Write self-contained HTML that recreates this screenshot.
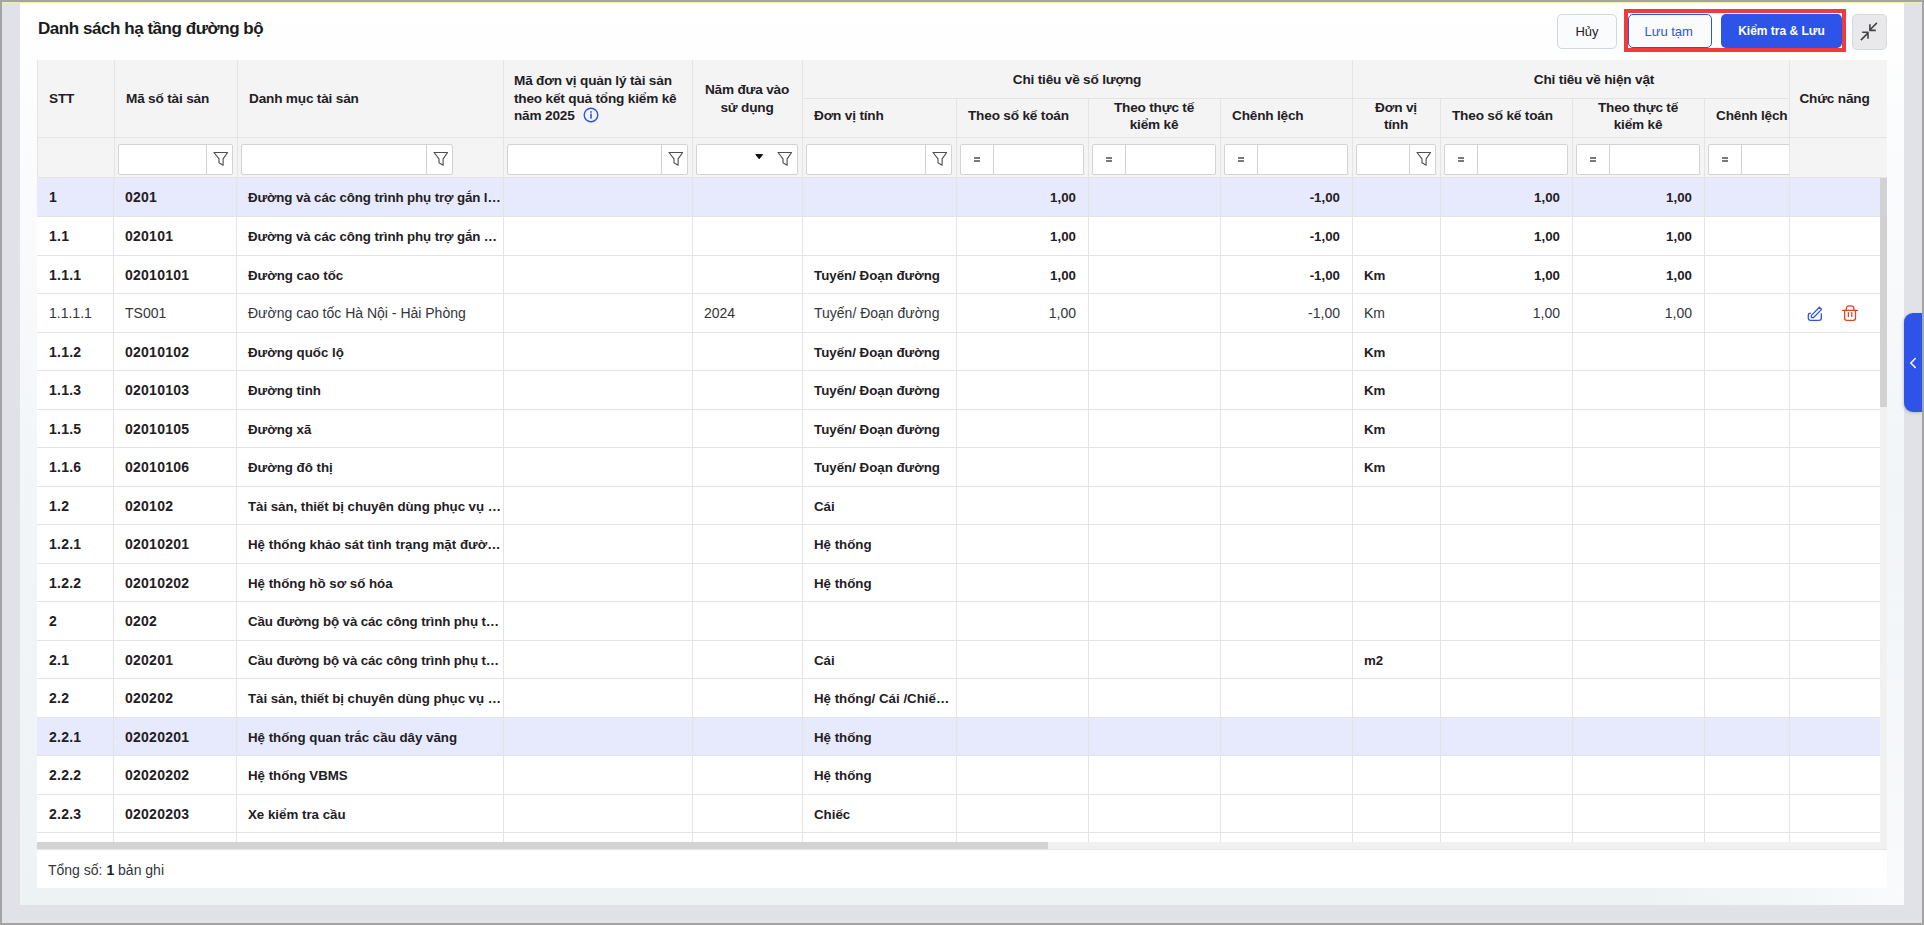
<!DOCTYPE html>
<html><head><meta charset="utf-8"><title>Danh sách hạ tầng đường bộ</title><style>
html,body{margin:0;padding:0;}
body{width:1924px;height:925px;position:relative;overflow:hidden;background:#e1e2e8;font-family:"Liberation Sans", sans-serif;}
.t{position:absolute;white-space:nowrap;line-height:17px;}
.b{font-weight:bold;font-size:13.3px;color:#1f2024;}
.bd{font-weight:bold;font-size:14px;letter-spacing:0.25px;color:#1f2024;}
.n{font-size:14px;color:#33353a;}
.h{font-weight:bold;font-size:13.6px;letter-spacing:-0.18px;color:#1f2024;}
</style></head><body>

<div style="position:absolute;left:0px;top:0px;width:1924px;height:2px;background:#a4a4a4"></div>
<div style="position:absolute;left:0px;top:2px;width:1924px;height:1px;background:#f3eda8"></div>
<div style="position:absolute;left:0px;top:0px;width:2px;height:925px;background:#a4a4a4"></div>
<div style="position:absolute;left:0px;top:923px;width:1924px;height:2px;background:#a4a4a4"></div>
<div style="position:absolute;left:20px;top:3px;width:1884px;height:902px;background:radial-gradient(ellipse 260px 420px at 100% 100%,rgba(255,255,255,0.65),rgba(255,255,255,0) 100%),linear-gradient(180deg,#ffffff 0%,#fbfcfd 15%,#f3f6f9 50%,#edf2f5 100%)"></div>
<div class="t " style="left:38px;top:19px;font-size:17px;font-weight:bold;letter-spacing:-0.45px;color:#1b1c20;line-height:20px">Danh sách hạ tầng đường bộ</div>
<div style="position:absolute;left:1557px;top:14px;width:58px;height:33px;border:1px solid #d2d6de;border-radius:5px;background:#fafbfc"></div>
<div class="t " style="left:1557px;top:22.5px;width:60px;text-align:center;font-size:13px;color:#1f2024">Hủy</div>
<div style="position:absolute;left:1628px;top:14px;width:82px;height:32px;border:1px solid #2e53e8;border-radius:5px;background:#fafbfd"></div>
<div class="t " style="left:1626.7px;top:22.5px;width:84px;text-align:center;font-size:13px;color:#2e53e8">Lưu tạm</div>
<div style="position:absolute;left:1721px;top:14px;width:121px;height:34px;background:#2e53e8;border-radius:5px"></div>
<div class="t " style="left:1721px;top:22.5px;width:121px;text-align:center;font-size:12px;font-weight:bold;color:#fff">Kiểm tra &amp; Lưu</div>
<div style="position:absolute;left:1624px;top:9px;width:214px;height:35px;border:4px solid #ef3a3e"></div>
<div style="position:absolute;left:1852px;top:14px;width:33px;height:33.5px;border:1px solid #d6d9e0;border-radius:5px;background:#e9e9eb"></div>
<svg width="35" height="35" viewBox="0 0 35 35" style="position:absolute;left:1852px;top:14px" fill="none" stroke="#444" stroke-width="1.6" stroke-linejoin="round"><path d="M24.9 8.9 L18.3 15.5 M17.9 10.2 V16.4 H23.8"/><path d="M8.9 26.1 L15.6 19.4 M10.2 18.3 H16 V24.7"/></svg>
<div style="position:absolute;left:37px;top:60px;width:1850px;height:828px;background:#fff"></div>
<div style="position:absolute;left:37px;top:60px;width:1850px;height:118px;background:#f4f4f4"></div>
<div style="position:absolute;left:37px;top:178px;width:1843px;height:38px;background:#e7eafc"></div>
<div style="position:absolute;left:37px;top:718px;width:1843px;height:37px;background:#e7eafc"></div>
<div style="position:absolute;left:37px;top:216px;width:1843px;height:1px;background:#e4e4e4"></div>
<div style="position:absolute;left:37px;top:255px;width:1843px;height:1px;background:#e4e4e4"></div>
<div style="position:absolute;left:37px;top:293px;width:1843px;height:1px;background:#e4e4e4"></div>
<div style="position:absolute;left:37px;top:332px;width:1843px;height:1px;background:#e4e4e4"></div>
<div style="position:absolute;left:37px;top:370px;width:1843px;height:1px;background:#e4e4e4"></div>
<div style="position:absolute;left:37px;top:409px;width:1843px;height:1px;background:#e4e4e4"></div>
<div style="position:absolute;left:37px;top:447px;width:1843px;height:1px;background:#e4e4e4"></div>
<div style="position:absolute;left:37px;top:486px;width:1843px;height:1px;background:#e4e4e4"></div>
<div style="position:absolute;left:37px;top:524px;width:1843px;height:1px;background:#e4e4e4"></div>
<div style="position:absolute;left:37px;top:563px;width:1843px;height:1px;background:#e4e4e4"></div>
<div style="position:absolute;left:37px;top:601px;width:1843px;height:1px;background:#e4e4e4"></div>
<div style="position:absolute;left:37px;top:640px;width:1843px;height:1px;background:#e4e4e4"></div>
<div style="position:absolute;left:37px;top:678px;width:1843px;height:1px;background:#e4e4e4"></div>
<div style="position:absolute;left:37px;top:717px;width:1843px;height:1px;background:#e4e4e4"></div>
<div style="position:absolute;left:37px;top:755px;width:1843px;height:1px;background:#e4e4e4"></div>
<div style="position:absolute;left:37px;top:794px;width:1843px;height:1px;background:#e4e4e4"></div>
<div style="position:absolute;left:37px;top:832px;width:1843px;height:1px;background:#e4e4e4"></div>
<div style="position:absolute;left:113px;top:178px;width:1px;height:664px;background:#e4e4e4"></div>
<div style="position:absolute;left:236px;top:178px;width:1px;height:664px;background:#e4e4e4"></div>
<div style="position:absolute;left:503px;top:178px;width:1px;height:664px;background:#e4e4e4"></div>
<div style="position:absolute;left:692px;top:178px;width:1px;height:664px;background:#e4e4e4"></div>
<div style="position:absolute;left:802px;top:178px;width:1px;height:664px;background:#e4e4e4"></div>
<div style="position:absolute;left:956px;top:178px;width:1px;height:664px;background:#e4e4e4"></div>
<div style="position:absolute;left:1088px;top:178px;width:1px;height:664px;background:#e4e4e4"></div>
<div style="position:absolute;left:1220px;top:178px;width:1px;height:664px;background:#e4e4e4"></div>
<div style="position:absolute;left:1352px;top:178px;width:1px;height:664px;background:#e4e4e4"></div>
<div style="position:absolute;left:1440px;top:178px;width:1px;height:664px;background:#e4e4e4"></div>
<div style="position:absolute;left:1572px;top:178px;width:1px;height:664px;background:#e4e4e4"></div>
<div style="position:absolute;left:1704px;top:178px;width:1px;height:664px;background:#e4e4e4"></div>
<div style="position:absolute;left:37px;top:60px;width:1px;height:118px;background:#e4e4e4"></div>
<div style="position:absolute;left:37px;top:137px;width:1850px;height:1px;background:#e4e4e4"></div>
<div style="position:absolute;left:37px;top:177px;width:1850px;height:1px;background:#e4e4e4"></div>
<div style="position:absolute;left:802px;top:98px;width:987px;height:1px;background:#e4e4e4"></div>
<div style="position:absolute;left:114px;top:60px;width:1px;height:118px;background:#e4e4e4"></div>
<div style="position:absolute;left:237px;top:60px;width:1px;height:118px;background:#e4e4e4"></div>
<div style="position:absolute;left:503px;top:60px;width:1px;height:118px;background:#e4e4e4"></div>
<div style="position:absolute;left:692px;top:60px;width:1px;height:118px;background:#e4e4e4"></div>
<div style="position:absolute;left:802px;top:60px;width:1px;height:118px;background:#e4e4e4"></div>
<div style="position:absolute;left:1352px;top:60px;width:1px;height:118px;background:#e4e4e4"></div>
<div style="position:absolute;left:956px;top:98px;width:1px;height:80px;background:#e4e4e4"></div>
<div style="position:absolute;left:1088px;top:98px;width:1px;height:80px;background:#e4e4e4"></div>
<div style="position:absolute;left:1220px;top:98px;width:1px;height:80px;background:#e4e4e4"></div>
<div style="position:absolute;left:1440px;top:98px;width:1px;height:80px;background:#e4e4e4"></div>
<div style="position:absolute;left:1572px;top:98px;width:1px;height:80px;background:#e4e4e4"></div>
<div style="position:absolute;left:1704px;top:98px;width:1px;height:80px;background:#e4e4e4"></div>
<div class="t h" style="left:49px;top:90px;">STT</div>
<div class="t h" style="left:126px;top:90px;">Mã số tài sản</div>
<div class="t h" style="left:249px;top:90px;">Danh mục tài sản</div>
<div class="t h" style="left:514px;top:72px;line-height:17.5px">Mã đơn vị quản lý tài sản<br>theo kết quả tổng kiểm kê<br>năm 2025</div>
<svg width="16" height="16" viewBox="0 0 16 16" style="position:absolute;left:583px;top:107px"><circle cx="8" cy="8" r="6.8" fill="none" stroke="#2e53e8" stroke-width="1.4"/><rect x="7.2" y="6.6" width="1.6" height="5" fill="#2e53e8"/><rect x="7.2" y="4.2" width="1.6" height="1.6" fill="#2e53e8"/></svg>
<div class="t h" style="left:692px;top:81px;width:110px;text-align:center;line-height:17.5px">Năm đưa vào<br>sử dụng</div>
<div class="t h" style="left:802px;top:71px;width:550px;text-align:center">Chỉ tiêu về số lượng</div>
<div class="t h" style="left:1352px;top:71px;width:484px;text-align:center">Chỉ tiêu về hiện vật</div>
<div class="t h" style="left:814px;top:107px;">Đơn vị tính</div>
<div class="t h" style="left:968px;top:107px;">Theo số kế toán</div>
<div class="t h" style="left:1088px;top:98.5px;width:132px;text-align:center;line-height:17.5px">Theo thực tế<br>kiểm kê</div>
<div class="t h" style="left:1232px;top:107px;">Chênh lệch</div>
<div class="t h" style="left:1452px;top:107px;">Theo số kế toán</div>
<div class="t h" style="left:1572px;top:98.5px;width:132px;text-align:center;line-height:17.5px">Theo thực tế<br>kiểm kê</div>
<div class="t h" style="left:1716px;top:107px;">Chênh lệch</div>
<div class="t h" style="left:1352px;top:98.5px;width:88px;text-align:center;line-height:17.5px">Đơn vị<br>tính</div>
<div style="position:absolute;left:118px;top:144px;width:113px;height:29px;border:1px solid #d3d3d3;border-radius:2px;background:#fff"></div>
<div style="position:absolute;left:206px;top:145px;width:1px;height:29px;background:#d3d3d3"></div>
<svg width="17" height="17" viewBox="0 0 17 17" style="position:absolute;left:212px;top:151px"><path d="M2 1.5 H15.6 L11.1 7.9 V14.2 L7 11.8 V7.9 Z" fill="none" stroke="#505050" stroke-width="1.15" stroke-linejoin="round"/></svg>
<div style="position:absolute;left:241px;top:144px;width:210px;height:29px;border:1px solid #d3d3d3;border-radius:2px;background:#fff"></div>
<div style="position:absolute;left:426px;top:145px;width:1px;height:29px;background:#d3d3d3"></div>
<svg width="17" height="17" viewBox="0 0 17 17" style="position:absolute;left:432px;top:151px"><path d="M2 1.5 H15.6 L11.1 7.9 V14.2 L7 11.8 V7.9 Z" fill="none" stroke="#505050" stroke-width="1.15" stroke-linejoin="round"/></svg>
<div style="position:absolute;left:507px;top:144px;width:179px;height:29px;border:1px solid #d3d3d3;border-radius:2px;background:#fff"></div>
<div style="position:absolute;left:661px;top:145px;width:1px;height:29px;background:#d3d3d3"></div>
<svg width="17" height="17" viewBox="0 0 17 17" style="position:absolute;left:667px;top:151px"><path d="M2 1.5 H15.6 L11.1 7.9 V14.2 L7 11.8 V7.9 Z" fill="none" stroke="#505050" stroke-width="1.15" stroke-linejoin="round"/></svg>
<div style="position:absolute;left:696px;top:144px;width:100px;height:29px;border:1px solid #d3d3d3;border-radius:2px;background:#fff"></div>
<svg width="9" height="6" viewBox="0 0 9 6" style="position:absolute;left:755px;top:154px"><path d="M0.8 0.6 H7.6 L4.2 4.8 Z" fill="#111" stroke="#111" stroke-width="1" stroke-linejoin="round"/></svg>
<svg width="17" height="17" viewBox="0 0 17 17" style="position:absolute;left:775.5px;top:151px"><path d="M2 1.5 H15.6 L11.1 7.9 V14.2 L7 11.8 V7.9 Z" fill="none" stroke="#505050" stroke-width="1.15" stroke-linejoin="round"/></svg>
<div style="position:absolute;left:806px;top:144px;width:144px;height:29px;border:1px solid #d3d3d3;border-radius:2px;background:#fff"></div>
<div style="position:absolute;left:925px;top:145px;width:1px;height:29px;background:#d3d3d3"></div>
<svg width="17" height="17" viewBox="0 0 17 17" style="position:absolute;left:931px;top:151px"><path d="M2 1.5 H15.6 L11.1 7.9 V14.2 L7 11.8 V7.9 Z" fill="none" stroke="#505050" stroke-width="1.15" stroke-linejoin="round"/></svg>
<div style="position:absolute;left:960px;top:144px;width:122px;height:29px;border:1px solid #d3d3d3;border-radius:2px;background:#fff"></div>
<div style="position:absolute;left:993px;top:145px;width:1px;height:29px;background:#d3d3d3"></div>
<div style="position:absolute;left:974px;top:157px;width:6px;height:1.5px;background:#7a7a7a"></div>
<div style="position:absolute;left:974px;top:160px;width:6px;height:1.5px;background:#7a7a7a"></div>
<div style="position:absolute;left:1092px;top:144px;width:122px;height:29px;border:1px solid #d3d3d3;border-radius:2px;background:#fff"></div>
<div style="position:absolute;left:1125px;top:145px;width:1px;height:29px;background:#d3d3d3"></div>
<div style="position:absolute;left:1106px;top:157px;width:6px;height:1.5px;background:#7a7a7a"></div>
<div style="position:absolute;left:1106px;top:160px;width:6px;height:1.5px;background:#7a7a7a"></div>
<div style="position:absolute;left:1224px;top:144px;width:122px;height:29px;border:1px solid #d3d3d3;border-radius:2px;background:#fff"></div>
<div style="position:absolute;left:1257px;top:145px;width:1px;height:29px;background:#d3d3d3"></div>
<div style="position:absolute;left:1238px;top:157px;width:6px;height:1.5px;background:#7a7a7a"></div>
<div style="position:absolute;left:1238px;top:160px;width:6px;height:1.5px;background:#7a7a7a"></div>
<div style="position:absolute;left:1356px;top:144px;width:78px;height:29px;border:1px solid #d3d3d3;border-radius:2px;background:#fff"></div>
<div style="position:absolute;left:1409px;top:145px;width:1px;height:29px;background:#d3d3d3"></div>
<svg width="17" height="17" viewBox="0 0 17 17" style="position:absolute;left:1415px;top:151px"><path d="M2 1.5 H15.6 L11.1 7.9 V14.2 L7 11.8 V7.9 Z" fill="none" stroke="#505050" stroke-width="1.15" stroke-linejoin="round"/></svg>
<div style="position:absolute;left:1444px;top:144px;width:122px;height:29px;border:1px solid #d3d3d3;border-radius:2px;background:#fff"></div>
<div style="position:absolute;left:1477px;top:145px;width:1px;height:29px;background:#d3d3d3"></div>
<div style="position:absolute;left:1458px;top:157px;width:6px;height:1.5px;background:#7a7a7a"></div>
<div style="position:absolute;left:1458px;top:160px;width:6px;height:1.5px;background:#7a7a7a"></div>
<div style="position:absolute;left:1576px;top:144px;width:122px;height:29px;border:1px solid #d3d3d3;border-radius:2px;background:#fff"></div>
<div style="position:absolute;left:1609px;top:145px;width:1px;height:29px;background:#d3d3d3"></div>
<div style="position:absolute;left:1590px;top:157px;width:6px;height:1.5px;background:#7a7a7a"></div>
<div style="position:absolute;left:1590px;top:160px;width:6px;height:1.5px;background:#7a7a7a"></div>
<div style="position:absolute;left:1708px;top:144px;width:122px;height:29px;border:1px solid #d3d3d3;border-radius:2px;background:#fff"></div>
<div style="position:absolute;left:1741px;top:145px;width:1px;height:29px;background:#d3d3d3"></div>
<div style="position:absolute;left:1722px;top:157px;width:6px;height:1.5px;background:#7a7a7a"></div>
<div style="position:absolute;left:1722px;top:160px;width:6px;height:1.5px;background:#7a7a7a"></div>
<div class="t bd" style="left:49px;top:188.65px;">1</div>
<div class="t bd" style="left:125px;top:188.65px;">0201</div>
<div class="t b" style="left:248px;top:188.9px;letter-spacing:-0.11px">Đường và các công trình phụ trợ gắn l…</div>
<div class="t b" style="left:956px;top:188.9px;width:120px;text-align:right">1,00</div>
<div class="t b" style="left:1220px;top:188.9px;width:120px;text-align:right">-1,00</div>
<div class="t b" style="left:1440px;top:188.9px;width:120px;text-align:right">1,00</div>
<div class="t b" style="left:1572px;top:188.9px;width:120px;text-align:right">1,00</div>
<div class="t bd" style="left:49px;top:227.65px;">1.1</div>
<div class="t bd" style="left:125px;top:227.65px;">020101</div>
<div class="t b" style="left:248px;top:227.9px;letter-spacing:-0.11px">Đường và các công trình phụ trợ gắn …</div>
<div class="t b" style="left:956px;top:227.9px;width:120px;text-align:right">1,00</div>
<div class="t b" style="left:1220px;top:227.9px;width:120px;text-align:right">-1,00</div>
<div class="t b" style="left:1440px;top:227.9px;width:120px;text-align:right">1,00</div>
<div class="t b" style="left:1572px;top:227.9px;width:120px;text-align:right">1,00</div>
<div class="t bd" style="left:49px;top:266.65px;">1.1.1</div>
<div class="t bd" style="left:125px;top:266.65px;">02010101</div>
<div class="t b" style="left:248px;top:266.9px;">Đường cao tốc</div>
<div class="t b" style="left:814px;top:266.9px;">Tuyến/ Đoạn đường</div>
<div class="t b" style="left:956px;top:266.9px;width:120px;text-align:right">1,00</div>
<div class="t b" style="left:1220px;top:266.9px;width:120px;text-align:right">-1,00</div>
<div class="t b" style="left:1364px;top:266.9px;">Km</div>
<div class="t b" style="left:1440px;top:266.9px;width:120px;text-align:right">1,00</div>
<div class="t b" style="left:1572px;top:266.9px;width:120px;text-align:right">1,00</div>
<div class="t n" style="left:49px;top:304.65px;">1.1.1.1</div>
<div class="t n" style="left:125px;top:304.65px;">TS001</div>
<div class="t n" style="left:248px;top:304.65px;">Đường cao tốc Hà Nội - Hải Phòng</div>
<div class="t n" style="left:704px;top:304.65px;">2024</div>
<div class="t n" style="left:814px;top:304.65px;">Tuyến/ Đoạn đường</div>
<div class="t n" style="left:956px;top:304.65px;width:120px;text-align:right">1,00</div>
<div class="t n" style="left:1220px;top:304.65px;width:120px;text-align:right">-1,00</div>
<div class="t n" style="left:1364px;top:304.65px;">Km</div>
<div class="t n" style="left:1440px;top:304.65px;width:120px;text-align:right">1,00</div>
<div class="t n" style="left:1572px;top:304.65px;width:120px;text-align:right">1,00</div>
<div class="t bd" style="left:49px;top:343.65px;">1.1.2</div>
<div class="t bd" style="left:125px;top:343.65px;">02010102</div>
<div class="t b" style="left:248px;top:343.9px;">Đường quốc lộ</div>
<div class="t b" style="left:814px;top:343.9px;">Tuyến/ Đoạn đường</div>
<div class="t b" style="left:1364px;top:343.9px;">Km</div>
<div class="t bd" style="left:49px;top:381.65px;">1.1.3</div>
<div class="t bd" style="left:125px;top:381.65px;">02010103</div>
<div class="t b" style="left:248px;top:381.9px;">Đường tỉnh</div>
<div class="t b" style="left:814px;top:381.9px;">Tuyến/ Đoạn đường</div>
<div class="t b" style="left:1364px;top:381.9px;">Km</div>
<div class="t bd" style="left:49px;top:420.65px;">1.1.5</div>
<div class="t bd" style="left:125px;top:420.65px;">02010105</div>
<div class="t b" style="left:248px;top:420.9px;">Đường xã</div>
<div class="t b" style="left:814px;top:420.9px;">Tuyến/ Đoạn đường</div>
<div class="t b" style="left:1364px;top:420.9px;">Km</div>
<div class="t bd" style="left:49px;top:458.65px;">1.1.6</div>
<div class="t bd" style="left:125px;top:458.65px;">02010106</div>
<div class="t b" style="left:248px;top:458.9px;">Đường đô thị</div>
<div class="t b" style="left:814px;top:458.9px;">Tuyến/ Đoạn đường</div>
<div class="t b" style="left:1364px;top:458.9px;">Km</div>
<div class="t bd" style="left:49px;top:497.65px;">1.2</div>
<div class="t bd" style="left:125px;top:497.65px;">020102</div>
<div class="t b" style="left:248px;top:497.9px;letter-spacing:-0.05px">Tài sản, thiết bị chuyên dùng phục vụ …</div>
<div class="t b" style="left:814px;top:497.9px;">Cái</div>
<div class="t bd" style="left:49px;top:535.65px;">1.2.1</div>
<div class="t bd" style="left:125px;top:535.65px;">02010201</div>
<div class="t b" style="left:248px;top:535.9px;letter-spacing:0.02px">Hệ thống khảo sát tình trạng mặt đườ…</div>
<div class="t b" style="left:814px;top:535.9px;">Hệ thống</div>
<div class="t bd" style="left:49px;top:574.65px;">1.2.2</div>
<div class="t bd" style="left:125px;top:574.65px;">02010202</div>
<div class="t b" style="left:248px;top:574.9px;">Hệ thống hồ sơ số hóa</div>
<div class="t b" style="left:814px;top:574.9px;">Hệ thống</div>
<div class="t bd" style="left:49px;top:612.65px;">2</div>
<div class="t bd" style="left:125px;top:612.65px;">0202</div>
<div class="t b" style="left:248px;top:612.9px;letter-spacing:-0.1px">Cầu đường bộ và các công trình phụ t…</div>
<div class="t bd" style="left:49px;top:651.65px;">2.1</div>
<div class="t bd" style="left:125px;top:651.65px;">020201</div>
<div class="t b" style="left:248px;top:651.9px;letter-spacing:-0.1px">Cầu đường bộ và các công trình phụ t…</div>
<div class="t b" style="left:814px;top:651.9px;">Cái</div>
<div class="t b" style="left:1364px;top:651.9px;">m2</div>
<div class="t bd" style="left:49px;top:689.65px;">2.2</div>
<div class="t bd" style="left:125px;top:689.65px;">020202</div>
<div class="t b" style="left:248px;top:689.9px;letter-spacing:-0.05px">Tài sản, thiết bị chuyên dùng phục vụ …</div>
<div class="t b" style="left:814px;top:689.9px;">Hệ thống/ Cái /Chiế…</div>
<div class="t bd" style="left:49px;top:728.65px;">2.2.1</div>
<div class="t bd" style="left:125px;top:728.65px;">02020201</div>
<div class="t b" style="left:248px;top:728.9px;">Hệ thống quan trắc cầu dây văng</div>
<div class="t b" style="left:814px;top:728.9px;">Hệ thống</div>
<div class="t bd" style="left:49px;top:766.65px;">2.2.2</div>
<div class="t bd" style="left:125px;top:766.65px;">02020202</div>
<div class="t b" style="left:248px;top:766.9px;">Hệ thống VBMS</div>
<div class="t b" style="left:814px;top:766.9px;">Hệ thống</div>
<div class="t bd" style="left:49px;top:805.65px;">2.2.3</div>
<div class="t bd" style="left:125px;top:805.65px;">02020203</div>
<div class="t b" style="left:248px;top:805.9px;">Xe kiểm tra cầu</div>
<div class="t b" style="left:814px;top:805.9px;">Chiếc</div>
<div style="position:absolute;left:1789px;top:60px;width:98px;height:118px;background:#f4f4f4"></div>
<div style="position:absolute;left:1789px;top:60px;width:1px;height:782px;background:#e4e4e4"></div>
<div style="position:absolute;left:1789px;top:137px;width:98px;height:1px;background:#e4e4e4"></div>
<div style="position:absolute;left:1789px;top:177px;width:98px;height:1px;background:#e4e4e4"></div>
<div class="t h" style="left:1789px;top:90px;width:91px;text-align:center">Chức năng</div>
<div style="position:absolute;left:1790px;top:178px;width:90px;height:38px;background:#e7eafc"></div>
<div style="position:absolute;left:1789px;top:216px;width:91px;height:1px;background:#e4e4e4"></div>
<div style="position:absolute;left:1790px;top:217px;width:90px;height:38px;background:#fff"></div>
<div style="position:absolute;left:1789px;top:255px;width:91px;height:1px;background:#e4e4e4"></div>
<div style="position:absolute;left:1790px;top:256px;width:90px;height:37px;background:#fff"></div>
<div style="position:absolute;left:1789px;top:293px;width:91px;height:1px;background:#e4e4e4"></div>
<div style="position:absolute;left:1790px;top:294px;width:90px;height:38px;background:#fff"></div>
<svg width="16" height="16" viewBox="0 0 16 16" style="position:absolute;left:1807px;top:305px" fill="none" stroke="#2e53e8" stroke-width="1.3" stroke-linecap="round" stroke-linejoin="round"><path d="M4.4 10.4 L12.4 2.3 L14.6 4.4 L6.6 12.5 L4.4 12.7 Z"/><path d="M3.3 8.2 Q1.3 8.3 1.3 10.6 V13 Q1.3 15.3 3.6 15.3 H12 Q14.3 15.3 14.3 13 V8.8"/></svg>
<svg width="18" height="18" viewBox="0 0 18 18" style="position:absolute;left:1841px;top:304px" fill="none" stroke="#df4522" stroke-width="1.3" stroke-linecap="round" stroke-linejoin="round"><path d="M1.4 6.3 H16.6"/><path d="M5.3 6.2 V4.9 Q5.3 1.8 8.2 1.8 H10 Q12.9 1.8 12.9 4.9 V6.2"/><path d="M3.6 6.5 V14.2 Q3.6 16.3 5.7 16.3 H12.4 Q14.5 16.3 14.5 14.2 V6.5"/><path d="M7.4 8.6 V12.6 M10.8 8.6 V12.6"/></svg>
<div style="position:absolute;left:1789px;top:332px;width:91px;height:1px;background:#e4e4e4"></div>
<div style="position:absolute;left:1790px;top:333px;width:90px;height:37px;background:#fff"></div>
<div style="position:absolute;left:1789px;top:370px;width:91px;height:1px;background:#e4e4e4"></div>
<div style="position:absolute;left:1790px;top:371px;width:90px;height:38px;background:#fff"></div>
<div style="position:absolute;left:1789px;top:409px;width:91px;height:1px;background:#e4e4e4"></div>
<div style="position:absolute;left:1790px;top:410px;width:90px;height:37px;background:#fff"></div>
<div style="position:absolute;left:1789px;top:447px;width:91px;height:1px;background:#e4e4e4"></div>
<div style="position:absolute;left:1790px;top:448px;width:90px;height:38px;background:#fff"></div>
<div style="position:absolute;left:1789px;top:486px;width:91px;height:1px;background:#e4e4e4"></div>
<div style="position:absolute;left:1790px;top:487px;width:90px;height:37px;background:#fff"></div>
<div style="position:absolute;left:1789px;top:524px;width:91px;height:1px;background:#e4e4e4"></div>
<div style="position:absolute;left:1790px;top:525px;width:90px;height:38px;background:#fff"></div>
<div style="position:absolute;left:1789px;top:563px;width:91px;height:1px;background:#e4e4e4"></div>
<div style="position:absolute;left:1790px;top:564px;width:90px;height:37px;background:#fff"></div>
<div style="position:absolute;left:1789px;top:601px;width:91px;height:1px;background:#e4e4e4"></div>
<div style="position:absolute;left:1790px;top:602px;width:90px;height:38px;background:#fff"></div>
<div style="position:absolute;left:1789px;top:640px;width:91px;height:1px;background:#e4e4e4"></div>
<div style="position:absolute;left:1790px;top:641px;width:90px;height:37px;background:#fff"></div>
<div style="position:absolute;left:1789px;top:678px;width:91px;height:1px;background:#e4e4e4"></div>
<div style="position:absolute;left:1790px;top:679px;width:90px;height:38px;background:#fff"></div>
<div style="position:absolute;left:1789px;top:717px;width:91px;height:1px;background:#e4e4e4"></div>
<div style="position:absolute;left:1790px;top:718px;width:90px;height:37px;background:#e7eafc"></div>
<div style="position:absolute;left:1789px;top:755px;width:91px;height:1px;background:#e4e4e4"></div>
<div style="position:absolute;left:1790px;top:756px;width:90px;height:38px;background:#fff"></div>
<div style="position:absolute;left:1789px;top:794px;width:91px;height:1px;background:#e4e4e4"></div>
<div style="position:absolute;left:1790px;top:795px;width:90px;height:37px;background:#fff"></div>
<div style="position:absolute;left:1789px;top:832px;width:91px;height:1px;background:#e4e4e4"></div>
<div style="position:absolute;left:1790px;top:833px;width:90px;height:9px;background:#fff"></div>
<div style="position:absolute;left:1880px;top:178px;width:7px;height:664px;background:#f1f1f1"></div>
<div style="position:absolute;left:1880px;top:178px;width:7px;height:229px;background:#d2d2d2"></div>
<div style="position:absolute;left:37px;top:842px;width:1850px;height:7px;background:#f1f1f1"></div>
<div style="position:absolute;left:37px;top:842px;width:1011px;height:7px;background:#d3d3d3"></div>
<div style="position:absolute;left:37px;top:849px;width:1850px;height:1px;background:#e6e6e6"></div>
<div class="t" style="left:48px;top:862px;font-size:14px;color:#33353a">Tổng số: <b style="color:#1f2024">1</b> bản ghi</div>
<div style="position:absolute;left:1904px;top:313px;width:18px;height:99px;background:#2e53e8;border-radius:9px 0 0 9px;box-shadow:-1px 1px 3px rgba(0,0,0,0.18)"></div>
<svg width="8" height="12" viewBox="0 0 8 12" style="position:absolute;left:1908.8px;top:356.5px" fill="none" stroke="#fff" stroke-width="1.5" stroke-linecap="round" stroke-linejoin="round"><path d="M6.3 1.5 L1.8 6 L6.3 10.5"/></svg>
<div style="position:absolute;left:1922px;top:0px;width:2px;height:925px;background:#a4a4a4"></div>
</body></html>
